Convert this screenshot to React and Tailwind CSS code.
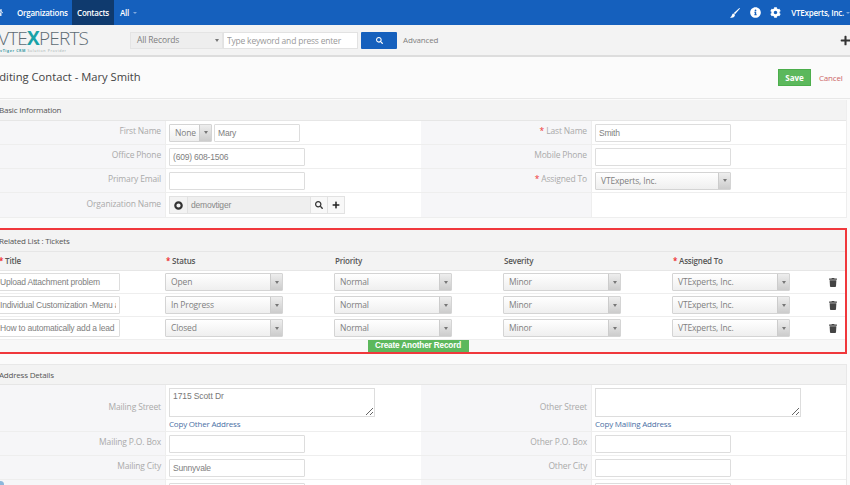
import React from "react";
import { FaHome, FaInfoCircle, FaCog, FaSearch, FaPlus, FaTrash } from "react-icons/fa";

const Field = ({ value = "", className = "w-[136px]" }) => (
  <input
    readOnly
    value={value}
    className={`h-[18px] border border-[#ddd] bg-white px-[3px] text-[8.5px] tracking-[-0.2px] text-[#808080] font-['Liberation_Sans',sans-serif] outline-none rounded-[1px] ${className}`}
  />
);

const Select = ({ label, className = "w-[118px]" }) => (
  <div className={`h-[18px] flex border border-[#d4d4d4] rounded-[1px] bg-linear-to-b from-white to-[#efefef] text-[8.5px] tracking-[-0.15px] text-[#808080] ${className}`}>
    <span className="flex-1 pl-[5px] leading-[16px] truncate">{label}</span>
    <span className="w-[12px] flex items-center justify-center border-l border-[#ccc] bg-linear-to-b from-[#eee] to-[#ccc]">
      <span className="border-x-[2px] border-t-[3px] border-x-transparent border-t-[#777]" />
    </span>
  </div>
);

const Label = ({ children, required }) => (
  <div className="flex items-center justify-end bg-[#f6f6f8] pr-[4px] pb-[2px] text-[8.5px] tracking-[-0.15px] text-[#aaa]">
    {required && <span className="text-[#e33] mr-[2px]">*</span>}
    {children}
  </div>
);

const Value = ({ children }) => (
  <div className="flex items-center gap-[2px] bg-white pl-[3px] border-l border-[#eee]">{children}</div>
);

const SectionHeader = ({ children, className }) => (
  <div className={`flex items-center bg-[#f3f3f3] border-b border-[#e6e6e6] text-[8px] tracking-[-0.2px] text-[#555] ${className}`}>
    {children}
  </div>
);

const Row = ({ children, className = "h-[24px]" }) => (
  <div className={`grid grid-cols-[176px_256px_170px_1fr] border-b border-[#eee] ${className}`}>{children}</div>
);

const tickets = [
  ["Upload Attachment problem", "Open"],
  ["Individual Customization -Menu and Fields", "In Progress"],
  ["How to automatically add a lead to a campaign", "Closed"],
];

const ticketCols = "grid grid-cols-[169px_169px_169px_169px_149px_1fr] pl-[5px]";

export default function App() {
  return (
    <div className="relative w-[850px] h-[485px] overflow-hidden bg-[#fbfbfb] font-['Open_Sans',sans-serif]">
      {/* top nav */}
      <div className="h-[25px] flex items-center bg-[#1560bd] text-white text-[8px] tracking-[-0.25px] font-semibold">
        <FaHome className="-ml-[6px] w-[9px] h-[9px] text-[#dfe9f6]" />
        <span className="ml-[14px] w-[48px] whitespace-nowrap">Organizations</span>
        <span className="ml-[7px] h-full w-[42px] flex items-center justify-center bg-[#0f3a6e]">Contacts</span>
        <span className="ml-[6px]">All</span>
        <span className="ml-[4px] border-x-[2px] border-t-[2px] border-x-transparent border-t-[#7fa8de]" />
        <div className="ml-auto flex items-center">
          <svg width="10" height="10" viewBox="0 0 10 10" fill="white">
            <path d="M9.4 0 L3.8 5 L5 6.2 L10 0.6 Z" />
            <path d="M3.4 5.4 C2.2 5.6 2 7 1.6 8 C1.3 8.7 0.8 9 0 9.4 C2 10 4.2 9.6 4.8 7.8 C5 7.2 4.9 6.6 4.6 6.3 Z" />
          </svg>
          <FaInfoCircle className="ml-[10px] w-[11px] h-[11px]" />
          <FaCog className="ml-[9px] w-[11px] h-[11px]" />
          <span className="ml-[10px]">VTExperts, Inc.</span>
          <span className="ml-[2px] border-x-[2px] border-t-[2px] border-x-transparent border-t-[#7fa8de]" />
        </div>
      </div>

      {/* search bar */}
      <div className="h-[32px] flex items-center bg-[#f3f3f3] border-b-2 border-[#ddd]">
        <div className="w-[132px] -ml-[2px] flex flex-col shrink-0">
          <div className="text-[19px] leading-[20px] font-light tracking-[-0.8px] text-[#5d6b73]">
            VTE<span className="font-bold text-[#18a2a8]">X</span>PERTS
          </div>
          <div className="pl-[2px] text-[3.6px] leading-[5px] tracking-[0.6px] text-[#9aa]">
            <span className="font-bold text-[#3a9aa5]">vTiger CRM</span> Solution Provider
          </div>
        </div>
        <div className="w-[93px] h-[17px] flex items-center justify-between pl-[6px] pr-[3px] bg-[#eee] border border-[#e4e4e4] text-[8.5px] tracking-[-0.15px] text-[#808080]">
          All Records
          <span className="border-x-[2px] border-t-[3px] border-x-transparent border-t-[#777]" />
        </div>
        <input
          readOnly
          placeholder="Type keyword and press enter"
          className="w-[135px] h-[17px] bg-white border border-[#e2e2e2] px-[3px] text-[8.5px] tracking-[-0.2px] outline-none placeholder:text-[#999]"
        />
        <button className="ml-[3px] w-[36px] h-[17px] flex items-center justify-center bg-[#1560bd] rounded-[1px]">
          <FaSearch className="w-[7px] h-[7px] text-white" />
        </button>
        <span className="ml-[6px] text-[8px] tracking-[-0.15px] text-[#808080]">Advanced</span>
        <FaPlus className="ml-auto -mr-[1px] w-[11px] h-[11px] text-[#333]" />
      </div>

      {/* title */}
      <div className="h-[42px] flex items-center border-b border-[#e8e8e8] pr-[8px]">
        <h1 className="-ml-[7px] text-[11.2px] text-[#444]">Editing Contact - Mary Smith</h1>
        <button className="ml-auto w-[33px] h-[17px] bg-[#5cb85c] border border-[#4cae4c] text-white text-[8px] font-bold">Save</button>
        <span className="ml-[8px] w-[23px] whitespace-nowrap text-[8px] tracking-[-0.2px] text-[#c66]">Cancel</span>
      </div>

      <div className="-ml-[11px] w-[858px] mt-[1px]">
        {/* basic information */}
        <div className="w-[858px] border-b border-[#eee] border-r">
          <SectionHeader className="h-[21px] pl-[10px]">Basic Information</SectionHeader>
          <Row>
            <Label>First Name</Label>
            <Value>
              <Select label="None" className="w-[43px]" />
              <Field value="Mary" className="w-[86px]" />
            </Value>
            <Label required>Last Name</Label>
            <Value><Field value="Smith" /></Value>
          </Row>
          <Row>
            <Label>Office Phone</Label>
            <Value><Field value="(609) 608-1506" /></Value>
            <Label>Mobile Phone</Label>
            <Value><Field /></Value>
          </Row>
          <Row>
            <Label>Primary Email</Label>
            <Value><Field /></Value>
            <Label required>Assigned To</Label>
            <Value><Select label="VTExperts, Inc." className="w-[136px]" /></Value>
          </Row>
          <Row className="h-[24px] border-b-0">
            <Label>Organization Name</Label>
            <Value>
              <div className="flex h-[18px] border border-[#e2e2e2] text-[8.5px] tracking-[-0.2px] text-[#888]">
                <span className="w-[17px] flex items-center justify-center bg-[#f3f3f3]">
                  <svg width="9" height="9" viewBox="0 0 9 9">
                    <circle cx="4.5" cy="4.5" r="3.2" fill="none" stroke="#333" strokeWidth="2.2" />
                  </svg>
                </span>
                <span className="w-[123px] pl-[3px] bg-[#efefef] border-l border-[#e2e2e2] leading-[16px] font-['Liberation_Sans',sans-serif]">demovtiger</span>
                <span className="w-[17px] flex items-center justify-center bg-[#f8f8f8] border-l border-[#e2e2e2]">
                  <FaSearch className="w-[8px] h-[8px] text-[#333]" />
                </span>
                <span className="w-[17px] flex items-center justify-center bg-[#f8f8f8] border-l border-[#e2e2e2]">
                  <FaPlus className="w-[8px] h-[8px] text-[#222]" />
                </span>
              </div>
            </Value>
            <div className="bg-[#f6f6f8]" />
            <div className="bg-white border-l border-[#eee]" />
          </Row>
        </div>

        {/* related tickets, highlighted in red */}
        <div className="mt-[10px] border-2 border-[#f0383c]">
          <SectionHeader className="h-[22px] pl-[8px]">Related List : Tickets</SectionHeader>
          <div className={`${ticketCols} h-[19px] items-center bg-[#f3f3f3] border-b border-[#e6e6e6] text-[8px] tracking-[-0.2px] font-semibold text-[#555]`}>
            <span className="pl-[3px]"><span className="text-[#e22]">*</span> Title</span>
            <span className="pl-[1px]"><span className="text-[#e22]">*</span> Status</span>
            <span className="pl-[1px]">Priority</span>
            <span className="pl-[1px]">Severity</span>
            <span className="pl-[1px]"><span className="text-[#e22]">*</span> Assigned To</span>
          </div>
          {tickets.map(([title, status]) => (
            <div key={title} className={`${ticketCols} h-[23px] items-center bg-white border-b border-[#eee]`}>
              <Field value={title} className="w-[124px]" />
              <Select label={status} />
              <Select label="Normal" />
              <Select label="Minor" />
              <Select label="VTExperts, Inc." />
              <FaTrash className="justify-self-center w-[8px] h-[9px] text-[#444]" />
            </div>
          ))}
          <div className="h-[12px] flex justify-center items-start bg-[#f8f8f8]">
            <button className="w-[101px] h-[12px] bg-[#5cb85c] text-white text-[8.2px] tracking-[-0.15px] leading-[12px] font-bold font-['Liberation_Sans',sans-serif]">
              Create Another Record
            </button>
          </div>
        </div>

        {/* address */}
        <div className="mt-[10px] border-t border-r border-[#e8e8e8]">
          <SectionHeader className="h-[20px] pl-[10px]">Address Details</SectionHeader>
          <Row className="h-[47px]">
            <Label>Mailing Street</Label>
            <Value>
              <div className="flex flex-col mt-[2px]">
                <textarea
                  readOnly
                  value="1715 Scott Dr"
                  className="block w-[206px] h-[29px] border border-[#ddd] bg-white px-[3px] py-[2px] text-[8.5px] tracking-[-0.1px] leading-[11px] text-[#777] font-['Liberation_Sans',sans-serif] outline-none"
                />
                <span className="mt-[1px] text-[8px] tracking-[-0.2px] leading-[12px] text-[#4a6fa5]">Copy Other Address</span>
              </div>
            </Value>
            <Label>Other Street</Label>
            <Value>
              <div className="flex flex-col mt-[2px]">
                <textarea readOnly className="block w-[206px] h-[29px] border border-[#ddd] bg-white outline-none" />
                <span className="mt-[1px] text-[8px] tracking-[-0.2px] leading-[12px] text-[#4a6fa5]">Copy Mailing Address</span>
              </div>
            </Value>
          </Row>
          <Row>
            <Label>Mailing P.O. Box</Label>
            <Value><Field /></Value>
            <Label>Other P.O. Box</Label>
            <Value><Field /></Value>
          </Row>
          <Row>
            <Label>Mailing City</Label>
            <Value><Field value="Sunnyvale" /></Value>
            <Label>Other City</Label>
            <Value><Field /></Value>
          </Row>
          <Row>
            <div className="bg-[#f6f6f8]" />
            <Value><Field /></Value>
            <div className="bg-[#f6f6f8]" />
            <Value><Field /></Value>
          </Row>
        </div>
      </div>

      {/* chat bubble peeking in at the corner */}
      <span className="absolute -left-[3px] -bottom-[3px] w-[7px] h-[7px] rounded-full bg-[#8db8dc]" />
    </div>
  );
}
